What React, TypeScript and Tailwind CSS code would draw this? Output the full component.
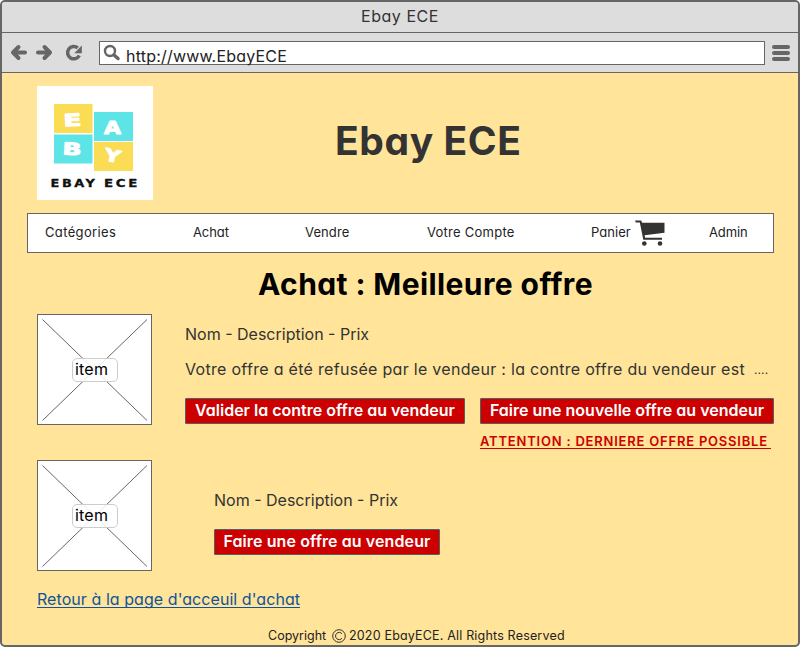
import type { ReactNode } from 'react';

function Logo() {
  return (
    <svg width="116" height="114" viewBox="0 0 116 114" className="block shrink-0 bg-white">
      <rect x="17" y="18" width="38.5" height="29" fill="#fbdc55" />
      <rect x="57" y="26" width="39" height="29" fill="#5ce4e6" />
      <rect x="17" y="48.5" width="38.5" height="29" fill="#5ce4e6" />
      <rect x="57" y="56" width="39" height="29" fill="#fbdc55" />
      <g className="font-['DejaVu_Sans'] font-bold" fill="#fff" stroke="#fff" strokeWidth="1" strokeLinejoin="round" fontSize="17">
        <text x="26.500" y="40" textLength="18" lengthAdjust="spacingAndGlyphs" transform="rotate(-3 35 34)">E</text>
        <text x="67" y="48" textLength="17" lengthAdjust="spacingAndGlyphs">A</text>
        <text x="25.500" y="69" textLength="19" lengthAdjust="spacingAndGlyphs" transform="rotate(3 35 63)">B</text>
        <text x="67.500" y="76" textLength="16" lengthAdjust="spacingAndGlyphs" transform="rotate(12 76 70)">Y</text>
      </g>
      <g className="font-['DejaVu_Sans'] font-bold" fontSize="10" fill="#111" stroke="#111" strokeWidth="0.3" strokeLinejoin="round">
        <text x="13.500" y="101" textLength="47" lengthAdjust="spacingAndGlyphs" letterSpacing="2">EBAY</text>
        <text x="67" y="101" textLength="36" lengthAdjust="spacingAndGlyphs" letterSpacing="2">ECE</text>
      </g>
    </svg>
  );
}

function Cart() {
  return (
    <svg width="30" height="27" viewBox="0 0 30 27" className="mt-px block shrink-0" fill="#333">
      <path d="M0 0.500h6.200l.9 2.200H29.500V12.800L9.600 15.300l.5 2.500H27v2H8.300L4.800 2.500H.8z" />
      <circle cx="9.300" cy="23.500" r="2.300" />
      <circle cx="25" cy="23.500" r="2.300" />
    </svg>
  );
}

function ItemImage() {
  return (
    <div className="relative h-[111px] w-[115px] shrink-0 border border-[#666] bg-white">
      <svg width="113" height="109" className="block" stroke="#666" strokeWidth="1">
        <path d="M4.500 4.500l104.500 101M109 4.500l-104.500 101" />
      </svg>
      <div className="absolute top-[43px] left-[34px] h-6 w-[46px] rounded-[5px] border border-[#ccc] bg-white/85 pl-0.5 text-base leading-[21px] tracking-[0.2px] text-black">
        item
      </div>
    </div>
  );
}

function RedButton({ className, children }: { className: string; children: ReactNode }) {
  return (
    <button className={`flex h-[26px] justify-center rounded-[1px] border border-[#555f66] bg-[#cc0000] text-base leading-[23px] font-semibold whitespace-nowrap text-white ${className}`}>
      {children}
    </button>
  );
}

export default function App() {
  return (
    <div className="flex h-[647px] w-[800px] flex-col overflow-hidden rounded-[5px] border-2 border-[#666] bg-[#ffe499] font-['Inter','Liberation_Sans',sans-serif] whitespace-nowrap text-[#333] [font-feature-settings:'cv11']">
      <header className="h-[31px] shrink-0 border-b border-[#666] bg-[#ddd] text-center text-base leading-[29px] tracking-[0.55px]">
        Ebay ECE
      </header>
      <div className="flex h-10 shrink-0 items-center border-b border-[#666] bg-[#ddd]">
        <svg width="97" height="39" className="block shrink-0" fill="none" stroke="#666" strokeWidth="4" strokeLinecap="round" strokeLinejoin="round">
          <path d="M23 19.500H12M16.500 14l-5.500 5.500 5.500 5.500M36 19.500h11M42.500 14l5.500 5.500-5.500 5.500" />
          <path d="M77.300 22.500a6.200 6.200 0 1 1-1.500-7.600" strokeWidth="3.500" strokeLinecap="butt" />
          <path d="M79.800 12.500V20.300H72.300z" fill="#666" stroke="none" />
        </svg>
        <div className="flex h-6 w-[666px] border border-[#666] bg-white">
          <svg width="26" height="22" className="block shrink-0" fill="none" stroke="#666">
            <circle cx="10" cy="9" r="5" strokeWidth="2.400" />
            <path d="M14 13l4 3.500" strokeWidth="3.500" strokeLinecap="round" />
          </svg>
          <span className="text-base leading-[28px] tracking-[0.2px] text-[#222]">http://www.EbayECE</span>
        </div>
        <svg width="18" height="18" className="ml-[7px] block" fill="#666">
          <rect y="1" width="18" height="4" rx="2" />
          <rect y="7" width="18" height="4" rx="2" />
          <rect y="13" width="18" height="4" rx="2" />
        </svg>
      </div>
      <main className="flex flex-col pl-[35px]">
        <div className="mt-[13px] flex">
          <Logo />
          <h1 className="ml-[182px] pt-[31px] text-[39px] leading-[48px] font-bold tracking-[0.6px]">Ebay ECE</h1>
        </div>
        <nav className="mt-[13px] -ml-[10px] flex h-10 w-[747px] items-center border border-[#666] bg-white pl-[17px] text-[13px] leading-5 text-[#222]">
          <a className="mb-0.5 w-[148px] tracking-[0.35px]">Catégories</a>
          <a className="mb-0.5 w-28 tracking-[-0.1px]">Achat</a>
          <a className="mb-0.5 w-[122px] tracking-[0.1px]">Vendre</a>
          <a className="mb-0.5 w-[164px] tracking-[0.25px]">Votre Compte</a>
          <a className="mb-0.5 w-11 tracking-[0.05px]">Panier</a>
          <Cart />
          <a className="mb-0.5 ml-11 tracking-[-0.1px]">Admin</a>
        </nav>
        <h2 className="mt-3 ml-[221px] text-[30px] leading-[38px] font-bold tracking-[0.4px] text-black">Achat : Meilleure offre</h2>
        <section className="mt-[11px] flex h-[146px]">
          <ItemImage />
          <div className="ml-[33px]">
            <p className="mt-2 leading-6">Nom - Description - Prix</p>
            <p className="mt-[11px] flex leading-6">
              <span className="w-[569px] tracking-[0.3px]">Votre offre a été refusée par le vendeur : la contre offre du vendeur est</span>
              <span className="text-xs leading-[26px] tracking-[0.1px]">....</span>
            </p>
            <div className="mt-[15px] flex gap-[15px]">
              <RedButton className="w-[280px]">Valider la contre offre au vendeur</RedButton>
              <RedButton className="w-[294px]">Faire une nouvelle offre au vendeur</RedButton>
            </div>
            <p className="mt-[9px] ml-[295px] h-4 w-[291px] border-b border-[#cc0000] text-[13px] leading-4 font-semibold tracking-[0.79px] text-[#cc0000]">
              ATTENTION : DERNIERE OFFRE POSSIBLE
            </p>
          </div>
        </section>
        <section className="flex">
          <ItemImage />
          <div className="ml-[62px]">
            <p className="mt-7 mb-[17px] leading-6">Nom - Description - Prix</p>
            <RedButton className="w-[226px] tracking-[0.1px]">Faire une offre au vendeur</RedButton>
          </div>
        </section>
        <a className="mt-[18px] h-[19px] w-[263px] border-b border-[#10539b] leading-[21px] tracking-[0.06px] text-[#10539b]">
          Retour à la page d'acceuil d'achat
        </a>
        <footer className="mt-[18px] ml-[231px] flex items-center text-[12.5px] leading-5 text-[#222]">
          <span className="w-16">Copyright</span>
          <svg width="14" height="14" className="mr-[3px] block" fill="none" stroke="#333">
            <circle cx="7" cy="7" r="6.300" />
            <path d="M10 4.800a3.600 3.600 0 1 0 0 4.400" />
          </svg>
          <span className="tracking-[0.18px]">2020 EbayECE. All Rights Reserved</span>
        </footer>
      </main>
    </div>
  );
}
